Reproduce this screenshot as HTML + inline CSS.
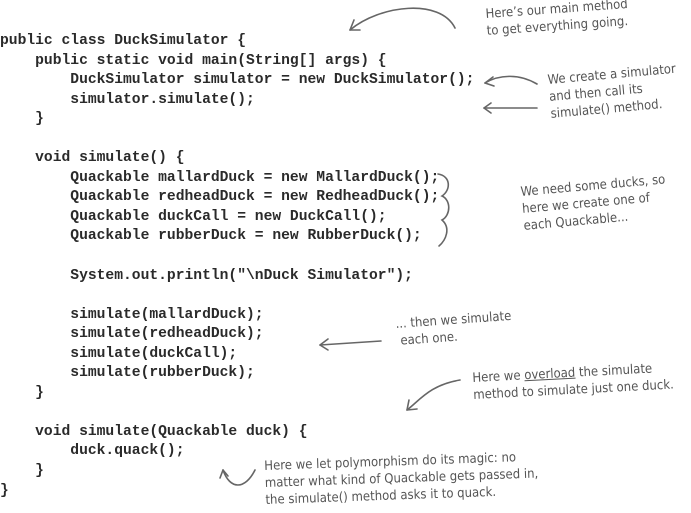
<!DOCTYPE html>
<html><head><meta charset="utf-8"><style>
html,body{margin:0;padding:0;background:#fff;width:691px;height:513px;overflow:hidden;position:relative}
pre{position:absolute;left:0;top:32px;margin:0;font-family:"Liberation Mono",monospace;font-size:14.65px;line-height:19.55px;color:#2a2a2a;font-weight:bold;letter-spacing:0}
.n{position:absolute;font-family:"DejaVu Sans Condensed","Liberation Sans Narrow","Liberation Sans",sans-serif;font-size:13px;line-height:17px;color:#555;white-space:nowrap;transform-origin:left top}
svg{position:absolute;left:0;top:0}
</style></head><body>
<pre>public class DuckSimulator {
    public static void main(String[] args) {
        DuckSimulator simulator = new DuckSimulator();
        simulator.simulate();
    }

    void simulate() {
        Quackable mallardDuck = new MallardDuck();
        Quackable redheadDuck = new RedheadDuck();
        Quackable duckCall = new DuckCall();
        Quackable rubberDuck = new RubberDuck();

        System.out.println("\nDuck Simulator");

        simulate(mallardDuck);
        simulate(redheadDuck);
        simulate(duckCall);
        simulate(rubberDuck);
    }

    void simulate(Quackable duck) {
        duck.quack();
    }
}</pre>
<div class="n" style="left:485px;top:6px;transform:rotate(-4deg)">Here’s our main method<br>to get everything going.</div>
<div class="n" style="left:547px;top:72px;transform:rotate(-5deg)">We create a simulator<br>and then call its<br>simulate() method.</div>
<div class="n" style="left:520px;top:184px;transform:rotate(-5deg)">We need some ducks, so<br>here we create one of<br>each Quackable...</div>
<div class="n" style="left:395px;top:316px;transform:rotate(-4deg)">... then we simulate<br>&nbsp;each one.</div>
<div class="n" style="left:472px;top:370px;transform:rotate(-3deg)">Here we <u>overload</u> the simulate<br>method to simulate just one duck.</div>
<div class="n" style="left:264px;top:458px;transform:rotate(-2deg)">Here we let polymorphism do its magic: no<br>matter what kind of Quackable gets passed in,<br>the simulate() method asks it to quack.</div>
<svg width="691" height="513" fill="none" stroke="#666" stroke-width="1.6" stroke-linecap="round">
<path d="M350 30 C380 5 440 -2 455 28"/><path d="M350 30 l4 -10 M350 30 l10 0"/>
<path d="M537 84 C520 74 500 74 485 83"/><path d="M485 83 l8 -6 M485 83 l9 3"/>
<path d="M537 108 L484 108"/><path d="M484 108 l7 -5 M484 108 l7 5"/>
<path d="M438 174 C451 176 451 190 442 196 C451 200 451 215 442 220 C451 228 446 240 439 246"/>
<path d="M381 341 L320 345"/><path d="M320 345 l8 -6 M320 345 l8 5"/>
<path d="M460 380 C430 385 420 400 407 410"/><path d="M407 410 l2 -10 M407 410 l10 -1"/>
<path d="M255 470 C245 490 230 490 223 470"/><path d="M223 470 l-3 8 M223 470 l5 6"/>
</svg>
</body></html>
